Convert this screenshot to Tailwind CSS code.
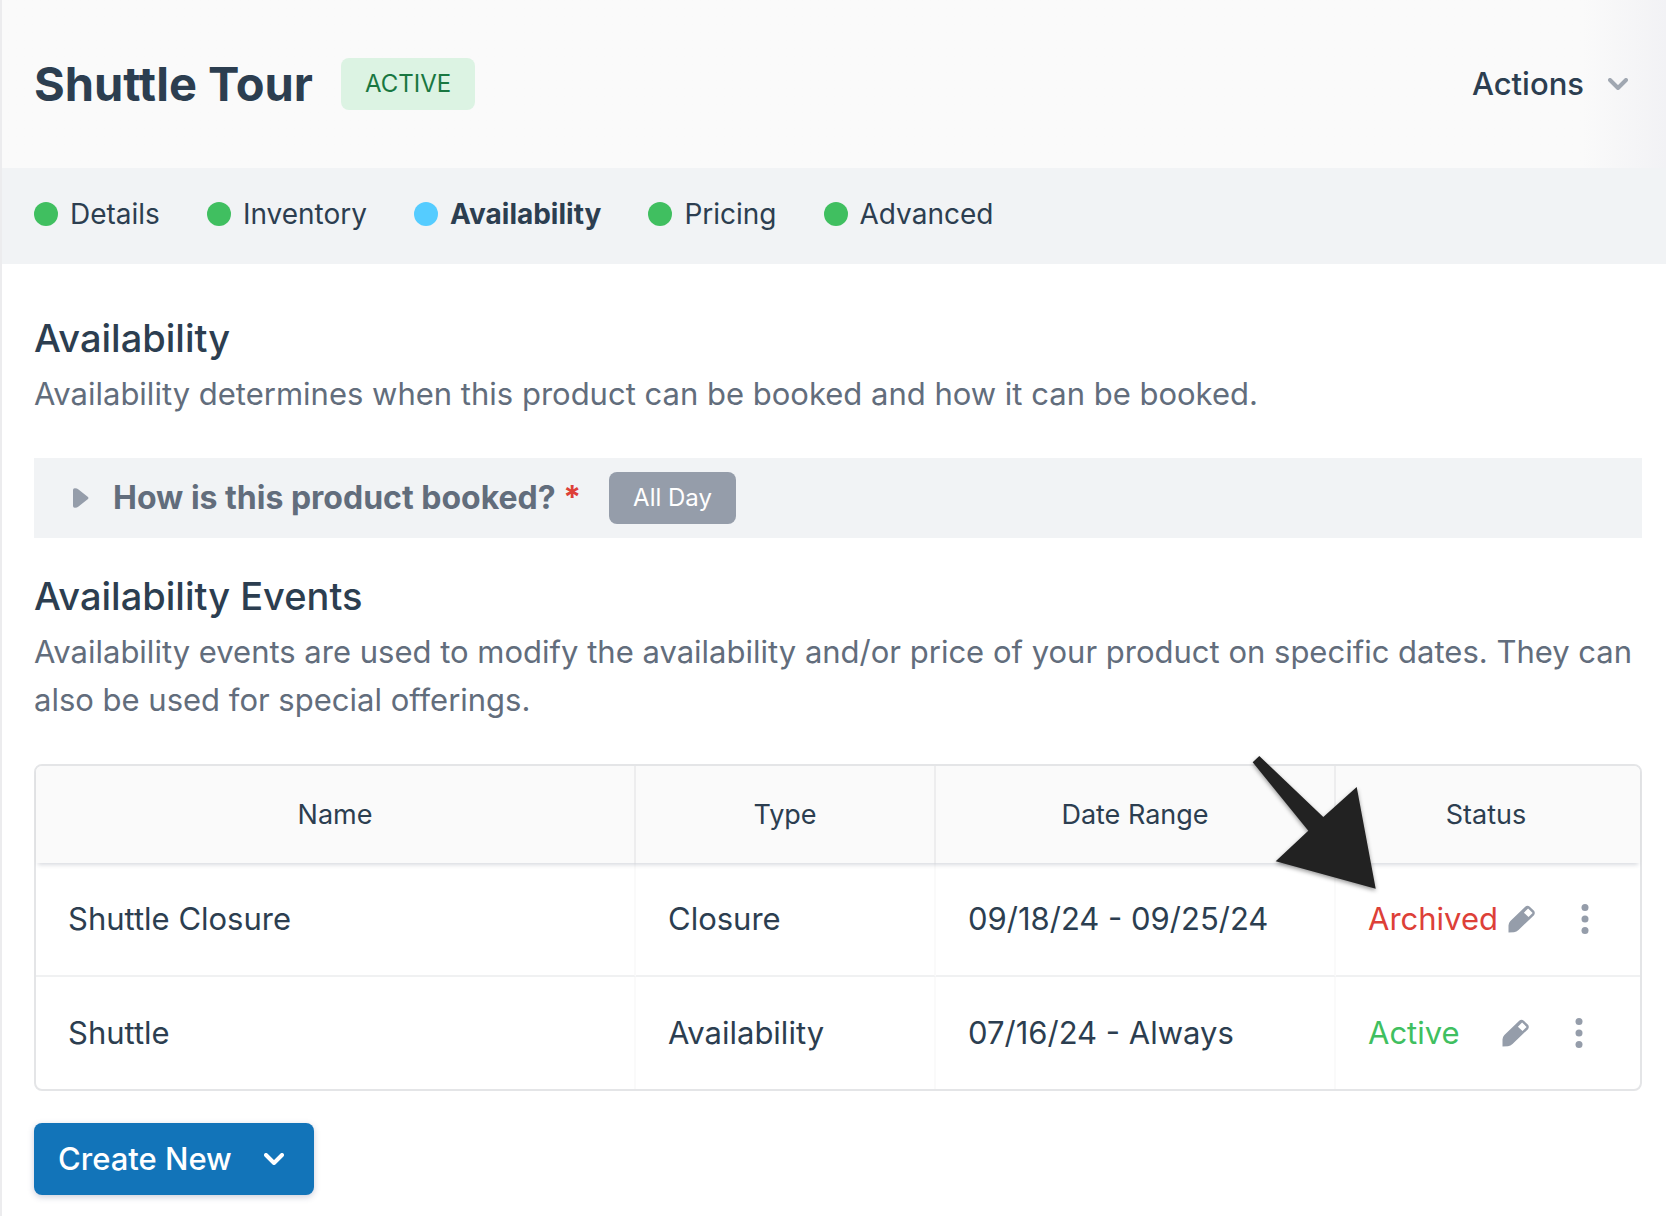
<!DOCTYPE html>
<html lang="en">
<head>
  <meta charset="UTF-8">
  <meta name="viewport" content="width=device-width, initial-scale=1.0">
  <title>Shuttle Tour - Availability</title>
  <script src="https://cdn.jsdelivr.net/npm/@tailwindcss/browser@4"></script>
  <style>
    body {
      font-family: 'Inter', sans-serif;
      -webkit-font-smoothing: antialiased;
    }
  </style>
</head>
<body class="min-h-screen border-l-2 border-[#ececee] bg-white text-[#2c3e50]">
  <header class="flex items-center justify-between bg-linear-to-r from-[#fafafa] from-95% to-[#f2f2f5] py-14 pr-[38px] pl-8">
    <div class="flex items-center gap-7">
      <h1 class="text-[47px] leading-[56px] font-bold">Shuttle Tour</h1>
      <span class="rounded-lg bg-[#dcf3e3] px-6 text-[24px] leading-[52px] text-[#197741]">ACTIVE</span>
    </div>
    <button type="button" class="flex items-center gap-6 text-[31px] leading-[48px] font-medium">
      Actions
      <svg class="h-3 w-5" viewBox="0 0 20 12" fill="none" stroke="#a0a7b1" stroke-width="4" stroke-linecap="round" stroke-linejoin="round"><path d="M2 2l8 8 8-8"/></svg>
    </button>
  </header>

  <!-- Product setup steps -->
  <nav class="flex items-center gap-[47px] bg-[#f1f3f5] pt-[22px] pb-[26px] pl-8 text-[28px] leading-[48px]">
    <a href="#details" class="flex items-center gap-3"><span class="size-6 rounded-full bg-[#40bf60]"></span>Details</a>
    <a href="#inventory" class="flex items-center gap-3"><span class="size-6 rounded-full bg-[#40bf60]"></span>Inventory</a>
    <a href="#availability" class="flex items-center gap-3 font-bold"><span class="size-6 rounded-full bg-[#55ccff]"></span>Availability</a>
    <a href="#pricing" class="flex items-center gap-3"><span class="size-6 rounded-full bg-[#40bf60]"></span>Pricing</a>
    <a href="#advanced" class="flex items-center gap-3"><span class="size-6 rounded-full bg-[#40bf60]"></span>Advanced</a>
  </nav>

  <main class="pt-[50px] pr-6 pb-5 pl-8">
    <h2 class="text-[38px] leading-[48px] font-medium">Availability</h2>
    <p class="mt-2 text-[31px] leading-[48px] text-[#626d7c]">Availability determines when this product can be booked and how it can be booked.</p>

    <div class="mt-10 flex h-20 items-center bg-[#f1f3f5] pl-[39px]">
      <button type="button" class="flex items-center gap-6 text-[32px] leading-[48px] font-bold text-[#626d7c]">
        <svg class="h-5 w-4" viewBox="0 0 16 20" fill="#959daa"><path d="M0 2Q0 0 2 0.2Q4 0.2 5.500 1.500L15 9Q16 10 15 11L5.500 18.500Q4 19.800 2 19.800Q0 20 0 18Z"/></svg>
        <span>How is this product booked? <span class="text-[#dd4038]">*</span></span>
      </button>
      <span class="ml-7 rounded-lg bg-[#959daa] px-6 text-[24px] leading-[52px] text-white">All Day</span>
    </div>

    <h2 class="mt-[34px] text-[38px] leading-[48px] font-medium">Availability Events</h2>
    <p class="mt-2 text-[31px] leading-[48px] text-[#626d7c]">Availability events are used to modify the availability and/or price of your product on specific dates. They can also be used for special offerings.</p>

    <div class="mt-10 rounded-lg border-2 border-[#e4e5e7]">
      <table class="w-full table-fixed border-separate border-spacing-0 text-left text-[31px] leading-[48px]">
        <colgroup>
          <col class="w-[600px]">
          <col class="w-[300px]">
          <col class="w-[400px]">
          <col>
        </colgroup>
        <thead class="relative text-center text-[27px] shadow-[0_4px_4px_-2px_rgba(50,60,90,0.18)]">
          <tr class="h-[97px]">
            <th scope="col" class="rounded-tl-md border-r-2 border-[#ededee] bg-[#fafafa] font-normal">Name</th>
            <th scope="col" class="border-r-2 border-[#ededee] bg-[#fafafa] font-normal">Type</th>
            <th scope="col" class="border-r-2 border-[#ededee] bg-[#fafafa] font-normal">Date Range</th>
            <th scope="col" class="relative rounded-tr-md bg-[#fafafa] pr-1 font-normal">
              Status
              <!-- Pointer to the archived event -->
              <svg class="absolute -top-4 -left-[86px] h-[145px] w-[130px] drop-shadow-[0_2px_2px_rgba(0,0,0,0.4)]" viewBox="0 0 130 145" fill="#222"><path d="M9.300 6L2.700 12.300L58.300 80.700L25.700 111.300L125.700 138.700L106.700 37L73.300 67Z"/></svg>
            </th>
          </tr>
        </thead>
        <tbody>
          <tr class="h-[114px]">
            <td class="border-r-2 border-b-2 border-r-[#fafafa] border-b-[#f0f1f2] px-8">Shuttle Closure</td>
            <td class="border-r-2 border-b-2 border-r-[#fafafa] border-b-[#f0f1f2] px-8">Closure</td>
            <td class="border-r-2 border-b-2 border-r-[#fafafa] border-b-[#f0f1f2] px-8">09/18/24 - 09/25/24</td>
            <td class="border-b-2 border-b-[#f0f1f2] pl-8">
              <div class="flex items-center">
                <span class="min-w-[124px] text-[#dd4038]">Archived</span>
                <button type="button" aria-label="Edit status" class="ml-[10px]">
                  <svg class="size-7" viewBox="0 0 28 28" fill="#959daa"><path fill-rule="evenodd" d="M0.500 27.500L0.500 20.500Q0.600 17.800 2.400 16L17.200 1.700Q19.500 -0.200 21.800 1.700L26 5.800Q27.600 8 26 10.200L10.500 25Q8.500 27 6 27.200ZM20.100 3.600L15.900 7.700L20.500 12L24.600 7.900Z"/></svg>
                </button>
                <button type="button" aria-label="More options" class="ml-[45px]">
                  <svg class="h-[30px] w-2" viewBox="0 0 8 30" fill="#959daa"><circle cx="4" cy="3.500" r="3.500"/><circle cx="4" cy="15" r="3.500"/><circle cx="4" cy="26.500" r="3.500"/></svg>
                </button>
              </div>
            </td>
          </tr>
          <tr class="h-[112px]">
            <td class="border-r-2 border-[#fafafa] px-8">Shuttle</td>
            <td class="border-r-2 border-[#fafafa] px-8">Availability</td>
            <td class="border-r-2 border-[#fafafa] px-8">07/16/24 - Always</td>
            <td class="pl-8">
              <div class="flex items-center">
                <span class="min-w-[124px] text-[#40bf60]">Active</span>
                <button type="button" aria-label="Edit status" class="ml-[10px]">
                  <svg class="size-7" viewBox="0 0 28 28" fill="#959daa"><path fill-rule="evenodd" d="M0.500 27.500L0.500 20.500Q0.600 17.800 2.400 16L17.200 1.700Q19.500 -0.200 21.800 1.700L26 5.800Q27.600 8 26 10.200L10.500 25Q8.500 27 6 27.200ZM20.100 3.600L15.900 7.700L20.500 12L24.600 7.900Z"/></svg>
                </button>
                <button type="button" aria-label="More options" class="ml-[45px]">
                  <svg class="h-[30px] w-2" viewBox="0 0 8 30" fill="#959daa"><circle cx="4" cy="3.500" r="3.500"/><circle cx="4" cy="15" r="3.500"/><circle cx="4" cy="26.500" r="3.500"/></svg>
                </button>
              </div>
            </td>
          </tr>
        </tbody>
      </table>
    </div>

    <button type="button" class="mt-8 flex h-[72px] items-center gap-8 rounded-lg bg-[#1274b9] pr-[30px] pl-6 text-[31px] leading-[48px] font-medium text-white shadow-[0_2px_6px_rgba(50,60,110,0.25)]">
      Create New
      <svg class="h-3 w-5" viewBox="0 0 20 12" fill="none" stroke="currentColor" stroke-width="4" stroke-linecap="round" stroke-linejoin="round"><path d="M2 2l8 8 8-8"/></svg>
    </button>
  </main>
</body>
</html>
